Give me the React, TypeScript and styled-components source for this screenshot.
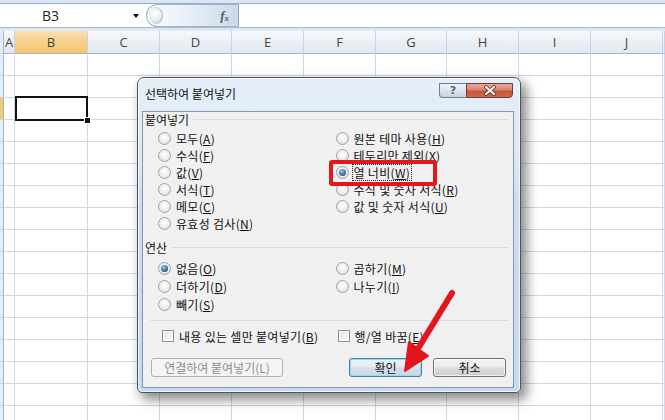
import React from 'react';
import styled, { createGlobalStyle, css } from 'styled-components';

const GlobalStyle = createGlobalStyle`
	html, body {
		margin: 0;
		padding: 0;
		background: #fff;
		overflow: hidden;
	}
	body {
		font-family: "Noto Sans CJK KR", "Noto Sans", sans-serif;
	}
`;

const COLUMNS = ['A', 'B', 'C', 'D', 'E', 'F', 'G', 'H', 'I', 'J', ''];
const ROW_COUNT = 17;

type OptionProps = {
	label: string;
	mn: string;
	checked?: boolean;
	focused?: boolean;
};

const RadioOption: React.FC<OptionProps> = ({ label, mn, checked, focused }) => (
	<OptionRow>
		<RadioDot $on={checked} />
		<OptionText $focused={focused}>
			{label}(<u>{mn}</u>)
		</OptionText>
	</OptionRow>
);

const CheckOption: React.FC<OptionProps> = ({ label, mn }) => (
	<OptionRow>
		<CheckBox />
		<OptionText>
			{label}(<u>{mn}</u>)
		</OptionText>
	</OptionRow>
);

export default function App() {
	return (
		<Page>
			<GlobalStyle />
			<FormulaBar>
				<FormulaRow>
					<NameBox>
						<span>B3</span>
						<DropArrow />
					</NameBox>
					<FxPill>
						<Handle />
						<FxText>
							f<sub>x</sub>
						</FxText>
					</FxPill>
					<FormulaInput />
				</FormulaRow>
			</FormulaBar>

			<Sheet>
				<RowHead />
				{COLUMNS.map((c) => (
					<ColHead key={c || 'K'} $active={c === 'B'}>
						{c}
					</ColHead>
				))}
				{Array.from({ length: ROW_COUNT }).map((_, r) => (
					<React.Fragment key={r}>
						<RowHead $active={r === 2} />
						{COLUMNS.map((c) => (
							<Cell key={c || 'K'} $selected={r === 2 && c === 'B'} />
						))}
					</React.Fragment>
				))}
			</Sheet>

			<Dialog>
				<TitleBar>
					<TitleText>선택하여 붙여넣기</TitleText>
					<CaptionButtons>
						<HelpButton>?</HelpButton>
						<CloseButton>
							<svg width="14" height="11" viewBox="0 0 14 11">
								<path d="M3 2 L11 9 M11 2 L3 9" stroke="#5a2218" strokeWidth="3.6" strokeLinecap="round" />
								<path d="M3 2 L11 9 M11 2 L3 9" stroke="#fff" strokeWidth="2.2" strokeLinecap="round" />
							</svg>
						</CloseButton>
					</CaptionButtons>
				</TitleBar>

				<Client>
					<GroupHeader>
						<span>붙여넣기</span>
						<Rule />
					</GroupHeader>
					<Columns $top={3}>
						<Column $step={17}>
							<RadioOption label="모두" mn="A" />
							<RadioOption label="수식" mn="F" />
							<RadioOption label="값" mn="V" />
							<RadioOption label="서식" mn="T" />
							<RadioOption label="메모" mn="C" />
							<RadioOption label="유효성 검사" mn="N" />
						</Column>
						<Column $step={17}>
							<RadioOption label="원본 테마 사용" mn="H" />
							<RadioOption label="테두리만 제외" mn="X" />
							<RadioOption label="열 너비" mn="W" checked focused />
							<RadioOption label="수식 및 숫자 서식" mn="R" />
							<RadioOption label="값 및 숫자 서식" mn="U" />
						</Column>
					</Columns>

					<GroupHeader $top={8}>
						<span>연산</span>
						<Rule />
					</GroupHeader>
					<Columns $top={4}>
						<Column $step={18}>
							<RadioOption label="없음" mn="O" checked />
							<RadioOption label="더하기" mn="D" />
							<RadioOption label="빼기" mn="S" />
						</Column>
						<Column $step={18}>
							<RadioOption label="곱하기" mn="M" />
							<RadioOption label="나누기" mn="I" />
						</Column>
					</Columns>

					<Separator />

					<CheckRow>
						<Column $step={16}>
							<CheckOption label="내용 있는 셀만 붙여넣기" mn="B" />
						</Column>
						<Column $step={16}>
							<CheckOption label="행/열 바꿈" mn="E" />
						</Column>
					</CheckRow>

					<ButtonRow>
						<Button $variant="disabled" $width={132}>
							연결하여 붙여넣기(L)
						</Button>
						<Spacer />
						<Button $variant="default" $width={73}>
							확인
						</Button>
						<Button $width={73}>취소</Button>
					</ButtonRow>
				</Client>
			</Dialog>

			<Highlight />
			<Arrow width="62" height="88" viewBox="0 0 62 88">
				<path d="M54 5 L21 59" stroke="#e3161e" strokeWidth="6" strokeLinecap="round" />
				<polygon points="7,83 30,68 11,54" fill="#e3161e" stroke="#e3161e" strokeWidth="2" strokeLinejoin="round" />
			</Arrow>
		</Page>
	);
}

const Page = styled.div`
	position: relative;
	width: 665px;
	height: 420px;
	overflow: hidden;
	background: #fff;
`;

/* ---------- formula bar ---------- */

const FormulaBar = styled.div`
	background: #dce6f2;
	padding-top: 3px;
	padding-bottom: 2px;
`;
const FormulaRow = styled.div`
	display: flex;
	height: 23px;
	background: #fff;
	border-top: 1px solid #97aecb;
	border-bottom: 1px solid #a7bad0;
`;
const NameBox = styled.div`
	display: flex;
	align-items: center;
	width: 146px;
	box-sizing: border-box;
	padding-left: 42px;
	font-family: 'Open Sans', 'Liberation Sans', sans-serif;
	font-size: 14px;
	color: #222;

	span {
		width: 91px;
	}
`;
const DropArrow = styled.i`
	width: 0;
	height: 0;
	border-left: 3.5px solid transparent;
	border-right: 3.5px solid transparent;
	border-top: 4px solid #111;
`;
const FxPill = styled.div`
	display: flex;
	align-items: center;
	justify-content: space-between;
	width: 93px;
	box-sizing: border-box;
	border: 1px solid #9fb3cb;
	border-right-color: #8ea2bb;
	border-radius: 12px 0 0 12px;
	background: linear-gradient(to right, #fbfcfe 0%, #e8eff8 45%, #cbd9ea 100%);
	padding: 0 9px 0 2px;
`;
const Handle = styled.i`
	width: 14px;
	height: 17px;
	border-radius: 50%;
	background: radial-gradient(circle at 45% 40%, #ffffff 0%, #eef1f5 40%, #c3ccd6 100%);
	box-shadow: inset -1px 0 1px rgba(90, 110, 140, 0.4);
`;
const FxText = styled.span`
	font-family: 'Liberation Serif', serif;
	font-style: italic;
	font-weight: bold;
	font-size: 13px;
	color: #5a5a5a;

	sub {
		font-size: 9px;
		vertical-align: -1px;
	}
`;
const FormulaInput = styled.div`
	flex: 1;
	background: #fff;
`;

/* ---------- sheet ---------- */

const Sheet = styled.div`
	display: grid;
	grid-template-columns: 4px 11px 73px 72px 72px 72px 72px 71px 72px 72px 72px 1fr;
	grid-template-rows: 23px;
	grid-auto-rows: 22px;
	background: #fff;
	border-top: 1px solid #e4ebf4;
`;
const ColHead = styled.div<{ $active?: boolean }>`
	display: flex;
	align-items: center;
	justify-content: center;
	box-sizing: border-box;
	border-right: 1px solid #c7d3e2;
	border-bottom: 1px solid #9eb6ce;
	background: ${(p) =>
		p.$active
			? 'linear-gradient(#fae0b0 0%, #f7d18b 50%, #f3c46b 100%)'
			: 'linear-gradient(#f6f8fb 0%, #ebeff5 50%, #e2e8f0 100%)'};
	font-family: 'Open Sans', 'Liberation Sans', sans-serif;
	font-size: 13px;
	color: #444;
`;
const RowHead = styled.div<{ $active?: boolean }>`
	box-sizing: border-box;
	border-right: 1px solid #9eb6ce;
	border-bottom: 1px solid #c5d3e3;
	background: ${(p) => (p.$active ? '#f6c875' : '#e4ecf7')};
`;
const Cell = styled.div<{ $selected?: boolean }>`
	box-sizing: border-box;
	border-right: 1px solid #d0d7e5;
	border-bottom: 1px solid #d0d7e5;

	${(p) =>
		p.$selected &&
		css`
			position: relative;
			z-index: 1;
			&::after {
				content: '';
				position: absolute;
				top: -2px;
				left: 0;
				right: -1px;
				bottom: -2px;
				border: 2px solid #111;
			}
			&::before {
				content: '';
				position: absolute;
				right: -4px;
				bottom: -5px;
				width: 5px;
				height: 5px;
				background: #111;
				border: 1px solid #fff;
				z-index: 2;
			}
		`}
`;

/* ---------- dialog ---------- */

const Dialog = styled.div`
	position: absolute;
	left: 137px;
	top: 77px;
	width: 384px;
	height: 316px;
	box-sizing: border-box;
	display: flex;
	flex-direction: column;
	padding: 0 6px 4px 4px;
	border: 1px solid #4b5561;
	border-radius: 7px 7px 5px 5px;
	background: linear-gradient(180deg, #e6eff9 0%, #dce8f6 25%, #cbddf2 40%, #c5d9f0 100%);
	box-shadow: 5px 6px 12px 1px rgba(0, 0, 0, 0.45), inset 0 0 0 1px rgba(255, 255, 255, 0.7);
	z-index: 5;
`;
const TitleBar = styled.div`
	display: flex;
	justify-content: space-between;
	align-items: flex-start;
	height: 33px;
	padding-left: 3px;
`;
const TitleText = styled.div`
	padding-top: 8px;
	font-size: 12px;
	line-height: 16px;
	color: #111;
`;
const CaptionButtons = styled.div`
	display: flex;
	margin-top: 5px;
	margin-right: 1px;
`;
const HelpButton = styled.div`
	width: 27px;
	height: 15px;
	box-sizing: border-box;
	display: flex;
	align-items: center;
	justify-content: center;
	border: 1px solid #6f7f94;
	border-right: none;
	border-radius: 0 0 0 4px;
	background: linear-gradient(#eef3f9 0%, #dbe4ef 50%, #c3d0e0 100%);
	font-family: 'DejaVu Sans', sans-serif;
	font-size: 11px;
	font-weight: bold;
	color: #506276;
	line-height: 1;
`;
const CloseButton = styled.div`
	width: 47px;
	height: 15px;
	box-sizing: border-box;
	display: flex;
	align-items: center;
	justify-content: center;
	border: 1px solid #6e3a33;
	border-radius: 0 0 4px 0;
	background: linear-gradient(#e9a996 0%, #d98470 45%, #c6533c 55%, #cf6a4c 100%);
`;
const Client = styled.div`
	flex: 1;
	display: flex;
	flex-direction: column;
	background: #f0f0f0;
	border: 1px solid #8797ab;
	font-size: 12px;
	color: #111;
`;
const GroupHeader = styled.div<{ $top?: number }>`
	display: flex;
	align-items: center;
	height: 15px;
	margin-top: ${(p) => p.$top ?? 0}px;
	padding: 0 4px 0 2px;
	line-height: 15px;
`;
const Rule = styled.div`
	flex: 1;
	height: 1px;
	margin-left: 4px;
	background: #d5dde6;
`;
const Columns = styled.div<{ $top: number }>`
	display: flex;
	margin-top: ${(p) => p.$top}px;
	padding-left: 15px;
`;
const Column = styled.div<{ $step: number }>`
	display: flex;
	flex-direction: column;
	width: 180px;

	& > div {
		height: ${(p) => p.$step}px;
	}
`;
const OptionRow = styled.div`
	display: flex;
	align-items: center;
	gap: 5px;
	white-space: nowrap;
`;
const RadioDot = styled.span<{ $on?: boolean }>`
	flex: none;
	width: 13px;
	height: 13px;
	box-sizing: border-box;
	border-radius: 50%;
	border: 1px solid #a2a2a2;
	background: radial-gradient(circle at 50% 40%, #ffffff 0%, #ececec 55%, #d3d3d3 100%);
	display: flex;
	align-items: center;
	justify-content: center;

	${(p) =>
		p.$on &&
		css`
			&::after {
				content: '';
				width: 7px;
				height: 7px;
				border-radius: 50%;
				background: radial-gradient(circle at 40% 35%, #9cd0f2 0%, #3a78aa 50%, #17405f 100%);
			}
		`}
`;
const CheckBox = styled.span`
	flex: none;
	width: 12px;
	height: 12px;
	box-sizing: border-box;
	border: 1px solid #8f8f8f;
	background: linear-gradient(135deg, #dcdcdc 0%, #f4f4f4 60%, #ffffff 100%);
	box-shadow: inset 0 0 0 1px #fff;
`;
const OptionText = styled.span<{ $focused?: boolean }>`
	line-height: 15px;
	letter-spacing: 0.3px;
	padding: 0 1px;
	border: 1px dotted ${(p) => (p.$focused ? '#222' : 'transparent')};
	margin-left: -2px;
`;
const Separator = styled.div`
	height: 1px;
	margin: 7px 4px 0 7px;
	background: #d5dde6;
`;
const CheckRow = styled.div`
	display: flex;
	margin-top: 7px;
	padding-left: 19px;

	& > div:first-child {
		width: 180px;
	}
`;
const ButtonRow = styled.div`
	display: flex;
	align-items: center;
	gap: 11px;
	margin-top: 14px;
	padding: 0 7px 0 8px;
`;
const Spacer = styled.div`
	flex: 1;
`;
const Button = styled.div<{ $variant?: 'default' | 'disabled'; $width: number }>`
	width: ${(p) => p.$width}px;
	height: 19px;
	box-sizing: border-box;
	display: flex;
	align-items: center;
	justify-content: center;
	border: 1px solid #707070;
	border-radius: 3px;
	background: linear-gradient(#f4f4f4 0%, #ebebeb 45%, #dddddd 52%, #cfcfcf 100%);
	box-shadow: inset 0 0 0 1px rgba(255, 255, 255, 0.7);
	font-size: 12px;
	line-height: 1;
	color: #111;

	${(p) =>
		p.$variant === 'default' &&
		css`
			border-color: #3c7fb1;
			box-shadow: inset 0 0 0 1px #9ed6f6;
			background: linear-gradient(#eef3f7 0%, #e4ebf1 45%, #d5dfe8 52%, #c9d6e1 100%);
		`}
	${(p) =>
		p.$variant === 'disabled' &&
		css`
			border-color: #adb2b5;
			background: #f4f4f4;
			box-shadow: none;
			color: #8d8d8d;
		`}
`;

/* ---------- annotations ---------- */

const Highlight = styled.div`
	position: absolute;
	left: 329px;
	top: 160px;
	width: 108px;
	height: 26px;
	box-sizing: border-box;
	border: 4px solid #e3161e;
	border-radius: 3px;
	z-index: 6;
`;
const Arrow = styled.svg`
	position: absolute;
	left: 398px;
	top: 288px;
	z-index: 7;
`;
